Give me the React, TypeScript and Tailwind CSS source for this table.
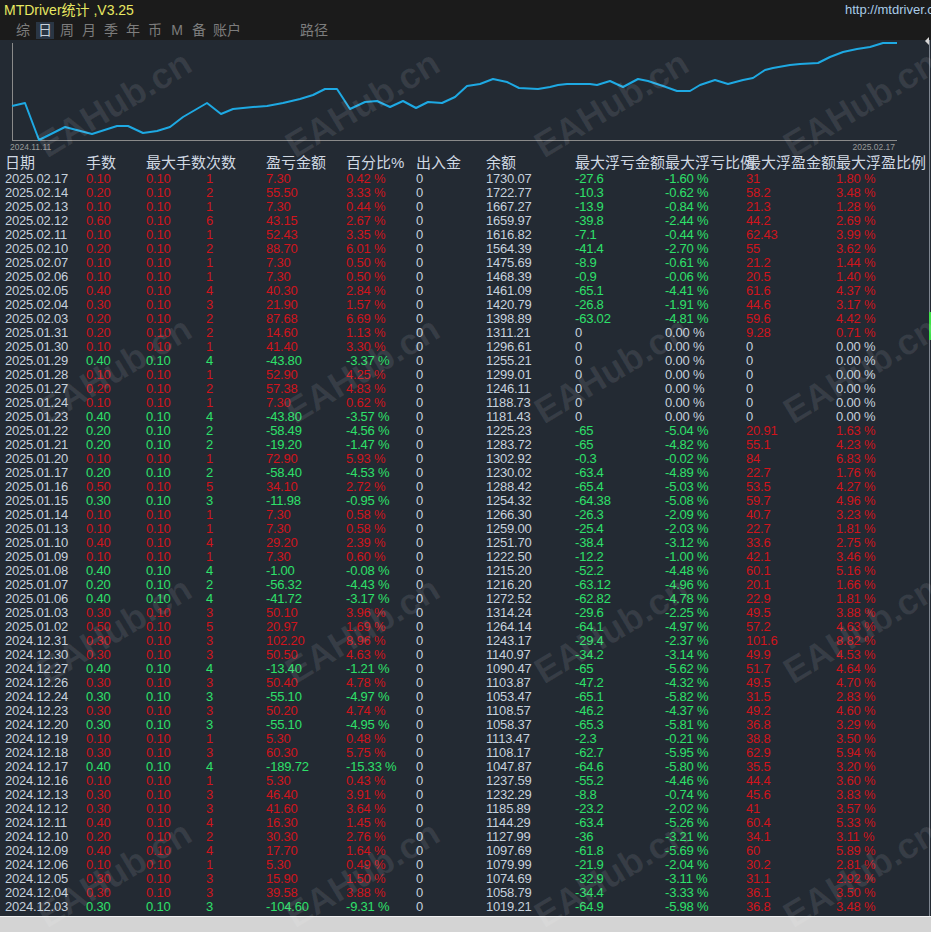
import React from 'react'

// One line per trading day: date lots maxLot count pnl pct io balance floatLoss floatLossPct floatProfit floatProfitPct
const ROWS = `2025.02.17 0.10 0.10 1 7.30 0.42 0 1730.07 -27.6 -1.60 31 1.80
2025.02.14 0.20 0.10 2 55.50 3.33 0 1722.77 -10.3 -0.62 58.2 3.48
2025.02.13 0.10 0.10 1 7.30 0.44 0 1667.27 -13.9 -0.84 21.3 1.28
2025.02.12 0.60 0.10 6 43.15 2.67 0 1659.97 -39.8 -2.44 44.2 2.69
2025.02.11 0.10 0.10 1 52.43 3.35 0 1616.82 -7.1 -0.44 62.43 3.99
2025.02.10 0.20 0.10 2 88.70 6.01 0 1564.39 -41.4 -2.70 55 3.62
2025.02.07 0.10 0.10 1 7.30 0.50 0 1475.69 -8.9 -0.61 21.2 1.44
2025.02.06 0.10 0.10 1 7.30 0.50 0 1468.39 -0.9 -0.06 20.5 1.40
2025.02.05 0.40 0.10 4 40.30 2.84 0 1461.09 -65.1 -4.41 61.6 4.37
2025.02.04 0.30 0.10 3 21.90 1.57 0 1420.79 -26.8 -1.91 44.6 3.17
2025.02.03 0.20 0.10 2 87.68 6.69 0 1398.89 -63.02 -4.81 59.6 4.42
2025.01.31 0.20 0.10 2 14.60 1.13 0 1311.21 0 0.00 9.28 0.71
2025.01.30 0.10 0.10 1 41.40 3.30 0 1296.61 0 0.00 0 0.00
2025.01.29 0.40 0.10 4 -43.80 -3.37 0 1255.21 0 0.00 0 0.00
2025.01.28 0.10 0.10 1 52.90 4.25 0 1299.01 0 0.00 0 0.00
2025.01.27 0.20 0.10 2 57.38 4.83 0 1246.11 0 0.00 0 0.00
2025.01.24 0.10 0.10 1 7.30 0.62 0 1188.73 0 0.00 0 0.00
2025.01.23 0.40 0.10 4 -43.80 -3.57 0 1181.43 0 0.00 0 0.00
2025.01.22 0.20 0.10 2 -58.49 -4.56 0 1225.23 -65 -5.04 20.91 1.63
2025.01.21 0.20 0.10 2 -19.20 -1.47 0 1283.72 -65 -4.82 55.1 4.23
2025.01.20 0.10 0.10 1 72.90 5.93 0 1302.92 -0.3 -0.02 84 6.83
2025.01.17 0.20 0.10 2 -58.40 -4.53 0 1230.02 -63.4 -4.89 22.7 1.76
2025.01.16 0.50 0.10 5 34.10 2.72 0 1288.42 -65.4 -5.03 53.5 4.27
2025.01.15 0.30 0.10 3 -11.98 -0.95 0 1254.32 -64.38 -5.08 59.7 4.96
2025.01.14 0.10 0.10 1 7.30 0.58 0 1266.30 -26.3 -2.09 40.7 3.23
2025.01.13 0.10 0.10 1 7.30 0.58 0 1259.00 -25.4 -2.03 22.7 1.81
2025.01.10 0.40 0.10 4 29.20 2.39 0 1251.70 -38.4 -3.12 33.6 2.75
2025.01.09 0.10 0.10 1 7.30 0.60 0 1222.50 -12.2 -1.00 42.1 3.46
2025.01.08 0.40 0.10 4 -1.00 -0.08 0 1215.20 -52.2 -4.48 60.1 5.16
2025.01.07 0.20 0.10 2 -56.32 -4.43 0 1216.20 -63.12 -4.96 20.1 1.66
2025.01.06 0.40 0.10 4 -41.72 -3.17 0 1272.52 -62.82 -4.78 22.9 1.81
2025.01.03 0.30 0.10 3 50.10 3.96 0 1314.24 -29.6 -2.25 49.5 3.88
2025.01.02 0.50 0.10 5 20.97 1.69 0 1264.14 -64.1 -4.97 57.2 4.63
2024.12.31 0.30 0.10 3 102.20 8.96 0 1243.17 -29.4 -2.37 101.6 8.82
2024.12.30 0.30 0.10 3 50.50 4.63 0 1140.97 -34.2 -3.14 49.9 4.53
2024.12.27 0.40 0.10 4 -13.40 -1.21 0 1090.47 -65 -5.62 51.7 4.64
2024.12.26 0.30 0.10 3 50.40 4.78 0 1103.87 -47.2 -4.32 49.5 4.70
2024.12.24 0.30 0.10 3 -55.10 -4.97 0 1053.47 -65.1 -5.82 31.5 2.83
2024.12.23 0.30 0.10 3 50.20 4.74 0 1108.57 -46.2 -4.37 49.2 4.60
2024.12.20 0.30 0.10 3 -55.10 -4.95 0 1058.37 -65.3 -5.81 36.8 3.29
2024.12.19 0.10 0.10 1 5.30 0.48 0 1113.47 -2.3 -0.21 38.8 3.50
2024.12.18 0.30 0.10 3 60.30 5.75 0 1108.17 -62.7 -5.95 62.9 5.94
2024.12.17 0.40 0.10 4 -189.72 -15.33 0 1047.87 -64.6 -5.80 35.5 3.20
2024.12.16 0.10 0.10 1 5.30 0.43 0 1237.59 -55.2 -4.46 44.4 3.60
2024.12.13 0.30 0.10 3 46.40 3.91 0 1232.29 -8.8 -0.74 45.6 3.83
2024.12.12 0.30 0.10 3 41.60 3.64 0 1185.89 -23.2 -2.02 41 3.57
2024.12.11 0.40 0.10 4 16.30 1.45 0 1144.29 -63.4 -5.26 60.4 5.33
2024.12.10 0.20 0.10 2 30.30 2.76 0 1127.99 -36 -3.21 34.1 3.11
2024.12.09 0.40 0.10 4 17.70 1.64 0 1097.69 -61.8 -5.69 60 5.89
2024.12.06 0.10 0.10 1 5.30 0.49 0 1079.99 -21.9 -2.04 30.2 2.81
2024.12.05 0.30 0.10 3 15.90 1.50 0 1074.69 -32.9 -3.11 31.1 2.92
2024.12.04 0.30 0.10 3 39.58 3.88 0 1058.79 -34.4 -3.33 36.1 3.50
2024.12.03 0.30 0.10 3 -104.60 -9.31 0 1019.21 -64.9 -5.98 36.8 3.48`
  .split('\n')
  .map((l) => l.split(' '))

const COLS = [
  'w-[81px]',
  'w-[60px]',
  'w-[60px]',
  'w-[60px]',
  'w-[80px]',
  'w-[70px]',
  'w-[70px]',
  'w-[89px]',
  'w-[90px]',
  'w-[81px]',
  'w-[90px]',
  'w-[95px]',
]

const HEADERS = ['日期', '手数', '最大手数次数', '', '盈亏金额', '百分比%', '出入金', '余额', '最大浮亏金额', '最大浮亏比例', '最大浮盈金额', '最大浮盈比例']

const TABS = ['综', '日', '周', '月', '季', '年', '币', 'M', '备']

const RED = 'text-[#d0141c]'
const GREEN = 'text-[#2ee06a]'
const LIGHT = 'text-[#c6d1dd]'

// balance curve, page coordinates (y is shifted by the chart's top of 40)
const CURVE = [
  [12, 106], [25, 103], [39, 140], [65, 127], [92, 134], [117, 126], [128, 126], [143, 133], [157, 131],
  [170, 127], [183, 117], [207, 103], [221, 114], [233, 109], [253, 107], [267, 106], [283, 103], [300, 99],
  [313, 95], [325, 89], [337, 89], [350, 109], [365, 102], [377, 101], [390, 107], [403, 101], [416, 108],
  [428, 102], [442, 103], [455, 97], [467, 86], [480, 84], [493, 79], [507, 82], [519, 88], [538, 89],
  [550, 87], [558, 85], [567, 84], [590, 84], [597, 85], [610, 81], [623, 87], [638, 79], [648, 81],
  [663, 86], [677, 91], [690, 91], [700, 85], [715, 80], [728, 84], [743, 80], [753, 78], [765, 70],
  [773, 68], [790, 65], [800, 64], [818, 63], [830, 57], [843, 52], [857, 49], [870, 47], [883, 43], [897, 43],
]

const MARKS_X = [50, 298, 547, 796]
const MARKS_Y = [164, 430, 690, 934]

function cellColor(row: string[], i: number) {
  if (i === 0 || i === 6 || i === 7) return LIGHT
  if (i <= 5) return row[4].startsWith('-') ? GREEN : RED
  if (i <= 9) return row[8] === '0' ? LIGHT : GREEN
  return row[10] === '0' ? LIGHT : RED
}

function Chart() {
  const pts = CURVE.map(([x, y]) => `${x},${y - 40}`).join(' ')
  return (
    <svg width={931} height={114} viewBox="0 0 931 114" className="block">
      <line x1={12.5} y1={3} x2={12.5} y2={100} stroke="#8a8a8a" strokeWidth={1} />
      <line x1={12} y1={100.5} x2={897} y2={100.5} stroke="#8a8a8a" strokeWidth={1} />
      <polyline points={pts} fill="none" stroke="#1ea9e3" strokeWidth={2} strokeLinejoin="round" />
      <text x={10} y={110} fontSize={8.5} fill="#9a9a9a" fontFamily="Liberation Sans, sans-serif">
        2024.11.11
      </text>
      <text x={895} y={110} fontSize={8.5} fill="#9a9a9a" textAnchor="end" fontFamily="Liberation Sans, sans-serif">
        2025.02.17
      </text>
    </svg>
  )
}

export default function App() {
  return (
    <div className="relative w-[931px] h-[932px] overflow-hidden bg-[#232a33] font-['Liberation_Sans','Noto_Sans_CJK_SC',sans-serif]">
      {/* Title + tab bar */}
      <div className="h-[40px] bg-[#1b1b1b] flex flex-col">
        <div className="h-[20px] flex items-center">
          <span className="pl-[4px] text-[14px] leading-[20px] text-[#e8e862]">MTDriver统计 ,V3.25</span>
          <span className="ml-auto w-[86px] overflow-hidden whitespace-nowrap text-[13px] leading-[20px] text-[#a9cbe8]">
            http://mtdriver.cn
          </span>
        </div>
        <div className="h-[20px] flex items-center pl-[14px] text-[14px] text-[#7d7d7d]">
          {TABS.map((t) => (
            <span
              key={t}
              className={
                t === '日'
                  ? 'w-[18px] h-[17px] mr-[4px] flex items-center justify-center bg-[#2a3644] text-[#c7d0da]'
                  : 'w-[18px] mr-[4px] flex justify-center'
              }
            >
              {t}
            </span>
          ))}
          <span className="ml-[1px]">账户</span>
          <span className="ml-[59px]">路径</span>
        </div>
      </div>

      {/* Statistics panel */}
      <div className="h-[876px] flex flex-col">
        <Chart />
        <div className="h-[18px] flex pl-[5px] text-[15px] leading-[18px] text-[#d0d8e2] whitespace-nowrap">
          {HEADERS.map((h, i) => (
            <div key={i} className={`${COLS[i]} shrink-0`}>
              {h}
            </div>
          ))}
        </div>
        <div className="flex flex-col text-[13px] leading-[14px] tracking-[-0.2px]">
          {ROWS.map((r) => (
            <div key={r[0]} className="h-[14px] flex pl-[5px] whitespace-nowrap">
              {r.map((v, i) => (
                <div key={i} className={`${COLS[i]} shrink-0 ${cellColor(r, i)}`}>
                  {i === 5 || i === 9 || i === 11 ? `${v} %` : v}
                </div>
              ))}
            </div>
          ))}
        </div>
      </div>

      {/* Window frame below */}
      <div className="h-[16px] bg-[#d4d4d4] border-t border-[#f2f2f2]" />

      {/* Right edge scroll marker */}
      <div className="absolute right-[1px] top-[40px] w-px h-[876px] bg-[#7d8590]" />
      <div className="absolute right-0 top-[312px] w-[2px] h-[28px] bg-[#3fe04a]" />
      <div className="absolute right-[2px] top-[37px] w-0 h-0 border-y-[4px] border-y-transparent border-r-[4px] border-r-[#d8d8d8]" />

      {/* Watermarks */}
      <div className="absolute inset-0 pointer-events-none">
        {MARKS_Y.map((y) =>
          MARKS_X.map((x) => (
            <span
              key={`${x}-${y}`}
              className="absolute origin-bottom-left -rotate-[31deg] text-[36px] leading-[36px] font-bold text-white/[0.09] whitespace-nowrap"
              style={{ left: x, top: y - 36 }}
            >
              EAHub.cn
            </span>
          )),
        )}
      </div>
    </div>
  )
}
